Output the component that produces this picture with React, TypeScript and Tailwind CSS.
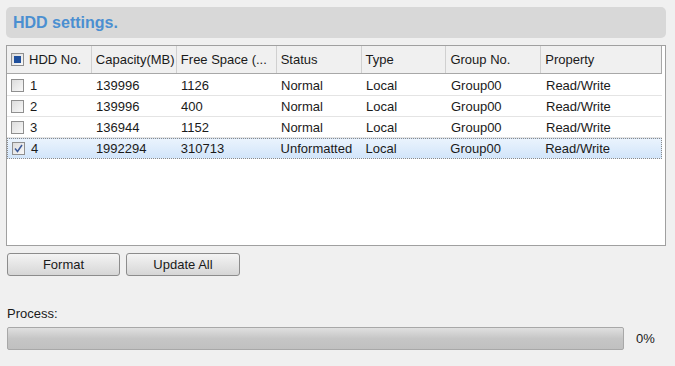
import React from 'react'

const COLS = [
  { label: 'HDD No.', w: 85 },
  { label: 'Capacity(MB)', w: 85 },
  { label: 'Free Space (...', w: 100 },
  { label: 'Status', w: 85 },
  { label: 'Type', w: 85 },
  { label: 'Group No.', w: 95 },
  { label: 'Property', w: 120 },
]

const ROWS = [
  ['1', '139996', '1126', 'Normal', 'Local', 'Group00', 'Read/Write'],
  ['2', '139996', '400', 'Normal', 'Local', 'Group00', 'Read/Write'],
  ['3', '136944', '1152', 'Normal', 'Local', 'Group00', 'Read/Write'],
  ['4', '1992294', '310713', 'Unformatted', 'Local', 'Group00', 'Read/Write'],
]

function Box({ checked, partial }: { checked?: boolean; partial?: boolean }) {
  return (
    <span className="flex h-[13px] w-[13px] shrink-0 items-center justify-center border border-[#8f8f8f] bg-gradient-to-br from-[#dcdcdc] to-[#f8f8f8]">
      {partial && <span className="h-[7px] w-[7px] bg-[#1e4f9c]" />}
      {checked && (
        <svg width="9" height="9" viewBox="0 0 9 9">
          <path d="M1 4.5 L3.5 7.5 L8 1" fill="none" stroke="#3c5a9a" strokeWidth="1.5" />
        </svg>
      )}
    </span>
  )
}

export default function App() {
  return (
    <div
      className="h-[366px] w-[675px] bg-[#f0f0f0] px-[6px] pt-[7px] text-[13px] leading-[15px] text-[#1a1a1a]"
      style={{ fontFamily: 'Arial, "Liberation Sans", sans-serif' }}
    >
      {/* Title */}
      <div className="flex h-[31px] w-[660px] items-center rounded-[5px] bg-[#d8d8d8] px-[7px]">
        <span className="text-[16px] leading-[18px] font-bold text-[#4b8fd1]">HDD settings.</span>
      </div>

      {/* Table */}
      <div className="mt-[7px] h-[201px] w-[660px] border border-[#a0a0a0] bg-white">
        <div className="flex h-[28px] w-[655px] border-r border-b border-[#a8a8a8] bg-[#f0f0f0]">
          {COLS.map((c, i) => (
            <div
              key={c.label}
              className="flex items-center gap-[5px] border-r border-[#d0d0d0] px-[4px] last:border-r-0"
              style={{ width: c.w }}
            >
              {i === 0 && <Box partial />}
              <span className="whitespace-nowrap">{c.label}</span>
            </div>
          ))}
        </div>
        <div className="pt-[1px]">
          {ROWS.map((r, ri) => {
            const sel = ri === 3
            return (
              <div
                key={ri}
                className={
                  sel
                    ? 'flex h-[21px] w-[655px] border border-dotted border-[#8a8a8a] bg-gradient-to-b from-[#eaf3fd] to-[#d2e5fa]'
                    : 'flex h-[21px] w-[655px] border-b border-[#e4e4e4]'
                }
              >
                {r.map((v, ci) => (
                  <div
                    key={ci}
                    className="flex items-center gap-[6px] px-[4px]"
                    style={{ width: COLS[ci].w - (sel && ci === 0 ? 1 : 0) }}
                  >
                    {ci === 0 && <Box checked={sel} />}
                    <span className="whitespace-nowrap">{v}</span>
                  </div>
                ))}
              </div>
            )
          })}
        </div>
      </div>

      {/* Buttons */}
      <div className="mt-[7px] flex gap-[6px] pl-[1px]">
        <button className="h-[23px] w-[113px] rounded-[3px] border border-[#8c8c8c] bg-gradient-to-b from-[#f4f4f4] to-[#d6d6d6] text-[13px]">
          Format
        </button>
        <button className="h-[23px] w-[114px] rounded-[3px] border border-[#8c8c8c] bg-gradient-to-b from-[#f4f4f4] to-[#d6d6d6] text-[13px]">
          Update All
        </button>
      </div>

      {/* Process */}
      <div className="mt-[30px] pl-[1px]">Process:</div>
      <div className="mt-[6px] flex items-center gap-[12px] pl-[1px]">
        <div className="h-[23px] w-[617px] rounded-[2px] border border-[#a8a8a8] bg-gradient-to-b from-[#e0e0e0] via-[#c6c6c6] to-[#c0c0c0]" />
        <span>0%</span>
      </div>
    </div>
  )
}
